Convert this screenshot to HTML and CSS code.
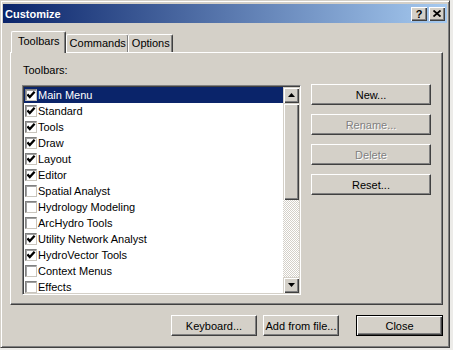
FILE: index.html
```html
<!DOCTYPE html>
<html lang="en">
<head>
  <meta charset="UTF-8" />
  <title>Customize</title>
  <link rel="stylesheet" href="styles.css">
</head>
<body>

  <div class="window">
    <div class="titlebar">
      <span class="title">Customize</span>
      <div class="title-buttons">
        <span class="tbtn help">?</span>
        <span class="tbtn">
          <svg width="8" height="7" viewBox="0 0 8 7"><path d="M0.5 0.5 L7.5 6.5 M7.5 0.5 L0.5 6.5" stroke="#000" stroke-width="1.8" fill="none"/></svg>
        </span>
      </div>
    </div>

    <div class="content">
      <div class="tabs">
        <div class="tab active">Toolbars</div>
        <div class="tab">Commands</div>
        <div class="tab">Options</div>
      </div>

      <div class="panel">
        <div class="left-col">
          <div class="label">Toolbars:</div>
          <div class="listbox">
            <ul class="items">
              <li class="item selected"><span class="check on"></span>Main Menu</li>
              <li class="item"><span class="check on"></span>Standard</li>
              <li class="item"><span class="check on"></span>Tools</li>
              <li class="item"><span class="check on"></span>Draw</li>
              <li class="item"><span class="check on"></span>Layout</li>
              <li class="item"><span class="check on"></span>Editor</li>
              <li class="item"><span class="check"></span>Spatial Analyst</li>
              <li class="item"><span class="check"></span>Hydrology Modeling</li>
              <li class="item"><span class="check"></span>ArcHydro Tools</li>
              <li class="item"><span class="check on"></span>Utility Network Analyst</li>
              <li class="item"><span class="check on"></span>HydroVector Tools</li>
              <li class="item"><span class="check"></span>Context Menus</li>
              <li class="item"><span class="check"></span>Effects</li>
            </ul>
            <div class="scrollbar">
              <div class="sb-btn">
                <svg width="7" height="4" viewBox="0 0 7 4"><polygon points="3.5,0 7,4 0,4" fill="#000"/></svg>
              </div>
              <div class="sb-thumb"></div>
              <div class="sb-track"></div>
              <div class="sb-btn">
                <svg width="7" height="4" viewBox="0 0 7 4"><polygon points="0,0 7,0 3.5,4" fill="#000"/></svg>
              </div>
            </div>
          </div>
        </div>

        <div class="side-buttons">
          <button class="btn">New...</button>
          <button class="btn" disabled>Rename...</button>
          <button class="btn" disabled>Delete</button>
          <button class="btn">Reset...</button>
        </div>
      </div>

      <div class="footer">
        <button class="btn btn-keyboard">Keyboard...</button>
        <button class="btn btn-add">Add from file...</button>
        <button class="btn btn-close default">Close</button>
      </div>
    </div>
  </div>

</body>
</html>
```

FILE: styles.css
```css
body {
  margin: 0;
  background-color: #ecebe8;
  font-family: "Liberation Sans", Arial, sans-serif;
  font-size: 11px;
  color: #000000;
}

.window {
  box-sizing: border-box;
  width: 450px;
  height: 348px;
  padding: 3px 2px 2px 2px;
  background-color: #d4d0c8;
  border: 1px solid;
  border-color: #d4d0c8 #404040 #404040 #d4d0c8;
  box-shadow: inset 1px 1px #ffffff, inset -1px -1px #808080;
}

/* title bar */

.titlebar {
  height: 19px;
  display: flex;
  align-items: center;
  justify-content: space-between;
  padding: 0 2px;
  background: linear-gradient(to right, #0a246a, #a6caf0);
}

.title {
  color: #ffffff;
  font-weight: bold;
  font-size: 11px;
}

.title-buttons {
  display: flex;
  gap: 2px;
}

.tbtn {
  box-sizing: border-box;
  width: 16px;
  height: 14px;
  display: flex;
  align-items: center;
  justify-content: center;
  background-color: #d4d0c8;
  box-shadow: inset 1px 1px #ffffff, inset -1px -1px #404040, inset -2px -2px #808080;
  font-weight: bold;
  font-size: 11px;
  line-height: 14px;
}

/* tabs */

.content {
  padding: 8px 4px 0 7px;
}

.tabs {
  display: flex;
  align-items: flex-end;
  height: 21px;
  padding-left: 1px;
}

.tab {
  box-sizing: border-box;
  height: 18px;
  padding: 2px 2px 0 3px;
  border-top: 1px solid #ffffff;
  border-left: 1px solid #ffffff;
  border-right: 1px solid #404040;
  box-shadow: inset -1px 0 #808080;
  border-radius: 2px 2px 0 0;
}

.tab + .tab {
  margin-left: -1px;
}

.tab.active {
  position: relative;
  z-index: 1;
  height: 22px;
  margin-bottom: -1px;
  padding: 3px 5px 0 6px;
  background-color: #d4d0c8;
}

.tab.active + .tab {
  margin-left: 0;
}

/* panel */

.panel {
  box-sizing: border-box;
  height: 253px;
  display: flex;
  padding: 11px 0 0 11px;
  border: 1px solid;
  border-color: #ffffff #404040 #404040 #ffffff;
  box-shadow: inset -1px -1px #808080;
}

.label {
  height: 13px;
  line-height: 13px;
  margin: 0 0 8px 1px;
}

.listbox {
  box-sizing: border-box;
  width: 279px;
  height: 210px;
  display: flex;
  padding: 1px;
  background-color: #ffffff;
  border: 1px solid;
  border-color: #808080 #ffffff #ffffff #808080;
  box-shadow: inset 1px 1px #404040, inset -1px -1px #d4d0c8;
}

.items {
  flex: 1;
  margin: 0;
  padding: 0;
  list-style: none;
  overflow: hidden;
}

.item {
  height: 16px;
  display: flex;
  align-items: center;
  line-height: 16px;
  white-space: nowrap;
}

.item.selected {
  background-color: #0a246a;
  color: #ffffff;
}

.check {
  box-sizing: border-box;
  width: 12px;
  height: 12px;
  margin: 0 1px 0 1px;
  background-color: #ffffff;
  border: 1px solid;
  border-color: #808080 #c8c4bc #c8c4bc #808080;
  box-shadow: inset 1px 1px #a0a0a0;
}

.check.on {
  background-image: url("data:image/svg+xml,%3Csvg xmlns='http://www.w3.org/2000/svg' width='10' height='10' viewBox='0 0 10 10'%3E%3Cpolyline points='1.4,4.4 3.8,7 8.6,1.8' fill='none' stroke='%23000' stroke-width='2.3'/%3E%3C/svg%3E");
  background-repeat: no-repeat;
  background-position: center;
}

/* scrollbar */

.scrollbar {
  width: 16px;
  display: flex;
  flex-direction: column;
}

.sb-btn, .sb-thumb {
  box-sizing: border-box;
  background-color: #d4d0c8;
  box-shadow: inset 1px 1px #d4d0c8, inset 2px 2px #ffffff, inset -1px -1px #404040, inset -2px -2px #808080;
}

.sb-btn {
  height: 16px;
  display: flex;
  align-items: center;
  justify-content: center;
}

.sb-thumb {
  height: 97px;
}

.sb-track {
  flex: 1;
  background: repeating-conic-gradient(#d4d0c8 0 25%, #ffffff 0 50%) 0 0 / 2px 2px;
}

/* buttons */

.side-buttons {
  display: flex;
  flex-direction: column;
  gap: 9px;
  margin-left: 10px;
  padding-top: 20px;
}

.btn {
  box-sizing: border-box;
  width: 120px;
  height: 21px;
  padding: 0;
  font-family: "Liberation Sans", Arial, sans-serif;
  font-size: 11px;
  color: #000000;
  background-color: #d4d0c8;
  border: 1px solid;
  border-color: #ffffff #404040 #404040 #ffffff;
  box-shadow: inset -1px -1px #808080;
}

.btn:disabled {
  color: #808080;
  text-shadow: 1px 1px #ffffff;
}

.footer {
  display: flex;
  justify-content: flex-end;
  margin-top: 10px;
}

.btn-keyboard {
  width: 86px;
}

.btn-add {
  width: 76px;
  margin-left: 6px;
}

.btn-close {
  width: 87px;
  margin-left: 17px;
}

.btn.default {
  border-color: #000000;
  box-shadow: inset 1px 1px #ffffff, inset -1px -1px #404040, inset -2px -2px #808080;
}
```
